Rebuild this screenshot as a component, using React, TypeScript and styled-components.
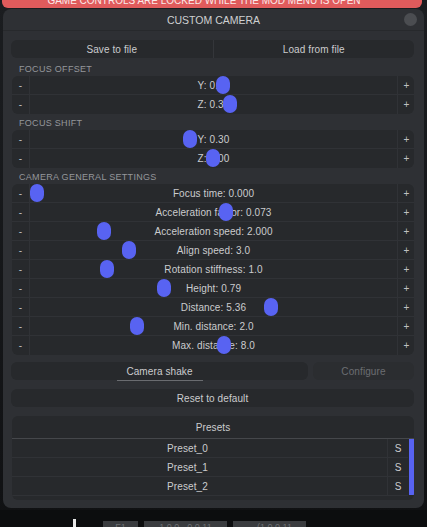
import React from 'react';
import styled, { createGlobalStyle } from 'styled-components';

type SliderRow = { label: string; knob: number };

const focusOffset: SliderRow[] = [
  { label: 'Y: 0.60', knob: 186 },
  { label: 'Z: 0.30', knob: 193 },
];

const focusShift: SliderRow[] = [
  { label: 'Y: 0.30', knob: 153 },
  { label: 'Z: 0.00', knob: 176 },
];

const general: SliderRow[] = [
  { label: 'Focus time: 0.000', knob: 0 },
  { label: 'Acceleration factor: 0.073', knob: 189 },
  { label: 'Acceleration speed: 2.000', knob: 67 },
  { label: 'Align speed: 3.0', knob: 92 },
  { label: 'Rotation stiffness: 1.0', knob: 70 },
  { label: 'Height: 0.79', knob: 127 },
  { label: 'Distance: 5.36', knob: 234 },
  { label: 'Min. distance: 2.0', knob: 100 },
  { label: 'Max. distance: 8.0', knob: 187 },
];

const presets = ['Preset_0', 'Preset_1', 'Preset_2'];

const Slider: React.FC<{ row: SliderRow }> = ({ row }) => (
  <Row>
    <StepCell>-</StepCell>
    <Track>
      <TrackLabel>{row.label}</TrackLabel>
      <Knob style={{ left: row.knob }} />
    </Track>
    <StepCell $right>+</StepCell>
  </Row>
);

const App: React.FC = () => {
  return (
    <Page>
      <GlobalStyle />
      <Banner>
        <BannerText>GAME CONTROLS ARE LOCKED WHILE THE MOD MENU IS OPEN</BannerText>
      </Banner>

      <Window>
        <TitleBar>
          CUSTOM CAMERA
          <CloseDot />
        </TitleBar>

        <Body>
          <SplitBar>
            <SplitButton>Save to file</SplitButton>
            <SplitButton $divider>Load from file</SplitButton>
          </SplitBar>

          <SectionLabel>FOCUS OFFSET</SectionLabel>
          <Group>
            {focusOffset.map((r) => (
              <Slider key={r.label} row={r} />
            ))}
          </Group>

          <SectionLabel>FOCUS SHIFT</SectionLabel>
          <Group>
            {focusShift.map((r) => (
              <Slider key={r.label} row={r} />
            ))}
          </Group>

          <SectionLabel>CAMERA GENERAL SETTINGS</SectionLabel>
          <Group>
            {general.map((r) => (
              <Slider key={r.label} row={r} />
            ))}
          </Group>

          <ButtonRow>
            <Button>
              <Underlined>Camera shake</Underlined>
            </Button>
            <Button $disabled>Configure</Button>
          </ButtonRow>

          <WideButton>Reset to default</WideButton>

          <PresetsBox>
            <PresetsHeader>Presets</PresetsHeader>
            <PresetList>
              <div>
                {presets.map((p) => (
                  <PresetRow key={p}>
                    <PresetName>{p}</PresetName>
                    <PresetSave>S</PresetSave>
                  </PresetRow>
                ))}
              </div>
              <ScrollBar />
            </PresetList>
          </PresetsBox>
        </Body>
      </Window>

      <BottomStrip>
        <Cursor />
        <Tab $w={35}>F1</Tab>
        <Tab $w={83}>1.0.0 - 0.0.11</Tab>
        <Tab $w={73}>... (1.0.0.11</Tab>
      </BottomStrip>
    </Page>
  );
};

export default App;

const GlobalStyle = createGlobalStyle`
  html, body {
    margin: 0;
    padding: 0;
    background: #141618;
  }
  * {
    box-sizing: border-box;
  }
`;

const Page = styled.div`
  width: 427px;
  height: 527px;
  overflow: hidden;
  display: flex;
  flex-direction: column;
  background: linear-gradient(#1b1d20, #101113);
  font-family: 'Liberation Sans', Arial, sans-serif;
  font-size: 10px;
  color: #cbccce;
`;

const Banner = styled.div`
  height: 8px;
  margin: 0 5px 0 2px;
  background: #e05b5c;
  border-radius: 0 0 6px 6px;
  overflow: hidden;
  text-align: center;
`;

const BannerText = styled.div`
  margin-top: -6.5px;
  padding-right: 16px;
  font-size: 10px;
  line-height: 13px;
  color: #fbeaea;
  white-space: nowrap;
`;

const Window = styled.div`
  margin: 1px 3px 0 3px;
  height: 499px;
  background: #2e3034;
  border-radius: 8px;
  display: flex;
  flex-direction: column;
`;

const TitleBar = styled.div`
  position: relative;
  height: 22px;
  display: flex;
  align-items: center;
  justify-content: center;
  font-size: 10.5px;
  color: #cfd0d2;
  border-bottom: 1px solid #27292c;
`;

const CloseDot = styled.span`
  position: absolute;
  right: 7px;
  top: 4px;
  width: 13px;
  height: 13px;
  border-radius: 50%;
  background: #4b4d51;
`;

const Body = styled.div`
  padding: 9px 10px 0 8px;
  display: flex;
  flex-direction: column;
`;

const SplitBar = styled.div`
  height: 18px;
  margin-bottom: 2px;
  display: grid;
  grid-template-columns: 1fr 1fr;
  background: #27292c;
  border-radius: 6px;
`;

const SplitButton = styled.div<{ $divider?: boolean }>`
  display: flex;
  align-items: center;
  justify-content: center;
  letter-spacing: 0.1px;
  border-left: ${({ $divider }) => ($divider ? '1px solid #34363a' : 'none')};
`;

const SectionLabel = styled.div`
  height: 16px;
  padding: 3px 0 0 8px;
  font-size: 9px;
  line-height: 13px;
  letter-spacing: 0.3px;
  color: #95979b;
`;

const Group = styled.div`
  margin-left: 1px;
  background: #27292c;
  border-radius: 6px;
  overflow: hidden;
`;

const Row = styled.div`
  height: 19px;
  display: grid;
  grid-template-columns: 18px 1fr 17px;
  border-bottom: 1px solid #303236;

  &:last-child {
    border-bottom: none;
  }
`;

const StepCell = styled.div<{ $right?: boolean }>`
  display: flex;
  align-items: center;
  justify-content: center;
  padding-left: ${({ $right }) => ($right ? '1px' : '0')};
  color: #bfc0c2;
  border-left: ${({ $right }) => ($right ? '1px solid #303236' : 'none')};
  border-right: ${({ $right }) => ($right ? 'none' : '1px solid #303236')};
`;

const Track = styled.div`
  position: relative;
  display: flex;
  align-items: center;
  justify-content: center;
`;

const TrackLabel = styled.span`
  letter-spacing: 0.1px;
  white-space: nowrap;
`;

const Knob = styled.span`
  position: absolute;
  top: 0;
  width: 14px;
  height: 18px;
  border-radius: 7px;
  background: #5863f2;
`;

const ButtonRow = styled.div`
  margin-top: 7px;
  display: grid;
  grid-template-columns: 1fr 101px;
  gap: 5px;
`;

const Button = styled.div<{ $disabled?: boolean }>`
  height: 18px;
  display: flex;
  align-items: center;
  justify-content: center;
  border-radius: 6px;
  background: ${({ $disabled }) => ($disabled ? '#2b2d30' : '#27292c')};
  color: ${({ $disabled }) => ($disabled ? '#6c6e72' : '#cbccce')};
  letter-spacing: 0.1px;
`;

const Underlined = styled.span`
  position: relative;
  padding: 0 2px;

  &::after {
    content: '';
    position: absolute;
    left: -7px;
    right: -8px;
    bottom: -4px;
    height: 1px;
    background: #6a6c70;
  }
`;

const WideButton = styled(Button)`
  margin-top: 9px;
`;

const PresetsBox = styled.div`
  margin: 9px 0 0 1px;
  height: 84px;
  background: #27292c;
  border-radius: 6px;
  overflow: hidden;
`;

const PresetsHeader = styled.div`
  height: 23px;
  display: flex;
  align-items: center;
  justify-content: center;
  border-bottom: 1px solid #45474b;
  letter-spacing: 0.1px;
`;

const PresetList = styled.div`
  display: grid;
  grid-template-columns: 1fr 5px;
  gap: 1px;
`;

const PresetRow = styled.div`
  height: 19px;
  display: grid;
  grid-template-columns: 1fr 21px;
  border-bottom: 1px solid #303236;
`;

const PresetName = styled.div`
  display: flex;
  align-items: center;
  justify-content: center;
  padding-right: 24px;
  letter-spacing: 0.1px;
`;

const PresetSave = styled.div`
  display: flex;
  align-items: center;
  justify-content: center;
  border-left: 1px solid #303236;
`;

const ScrollBar = styled.div`
  height: 56px;
  background: #5863f2;
`;

const BottomStrip = styled.div`
  flex: 1;
  display: flex;
  align-items: flex-end;
  padding-left: 73px;
  gap: 6px;
  background: #0c0d0e;
  margin-top: 2px;
`;

const Cursor = styled.span`
  width: 3px;
  height: 8px;
  margin-right: 21px;
  background: #e8e8e8;
`;

const Tab = styled.span<{ $w: number }>`
  width: ${({ $w }) => $w}px;
  height: 6px;
  overflow: hidden;
  background: #3a3c3f;
  color: #6d6f72;
  font-size: 9px;
  line-height: 12px;
  text-align: center;
  white-space: nowrap;
`;
